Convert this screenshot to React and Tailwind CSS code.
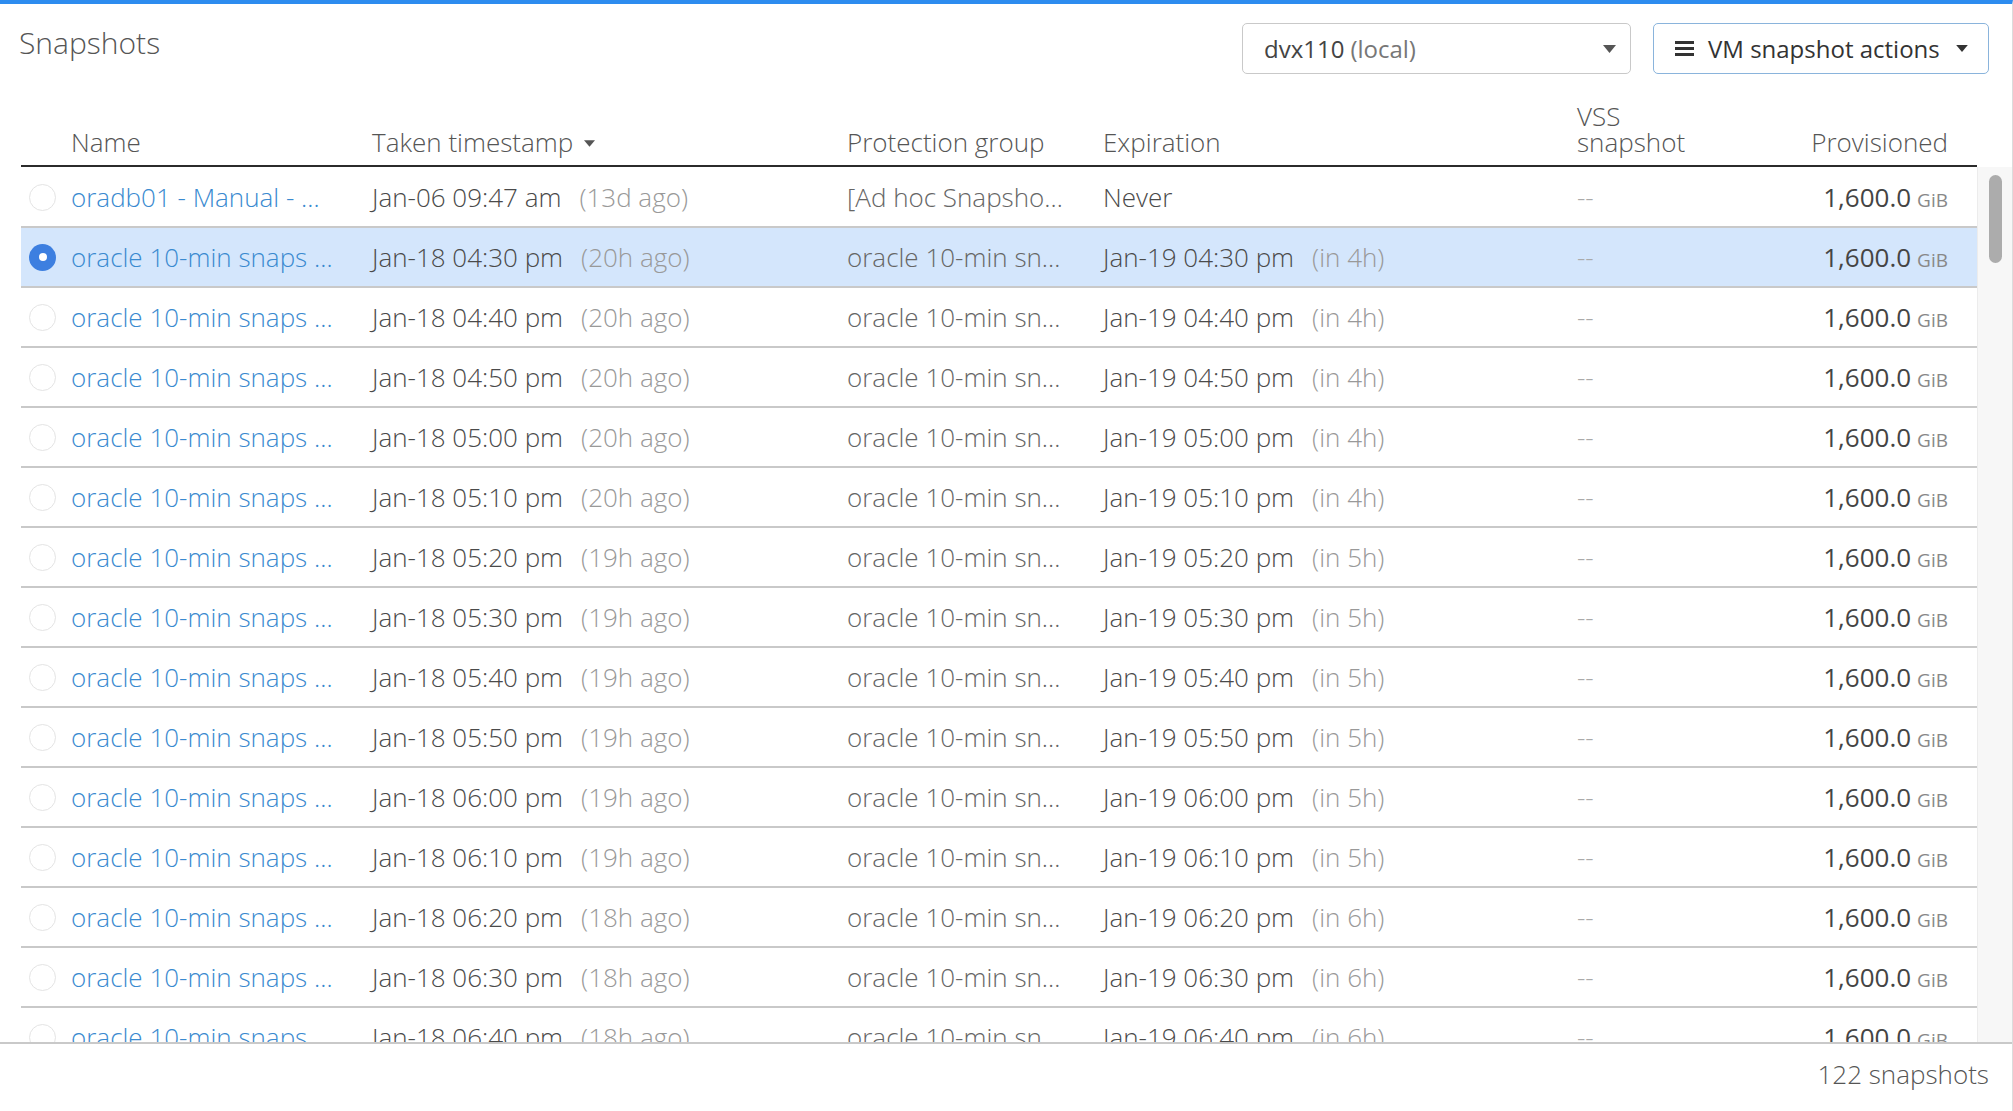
const rows = [
  { name: 'oradb01 - Manual - …', taken: 'Jan-06 09:47 am', ago: '(13d ago)', group: '[Ad hoc Snapsho…', exp: 'Never', inn: '' },
  ...[
    ['04:30', '20h', '4h'],
    ['04:40', '20h', '4h'],
    ['04:50', '20h', '4h'],
    ['05:00', '20h', '4h'],
    ['05:10', '20h', '4h'],
    ['05:20', '19h', '5h'],
    ['05:30', '19h', '5h'],
    ['05:40', '19h', '5h'],
    ['05:50', '19h', '5h'],
    ['06:00', '19h', '5h'],
    ['06:10', '19h', '5h'],
    ['06:20', '18h', '6h'],
    ['06:30', '18h', '6h'],
    ['06:40', '18h', '6h'],
    ['06:50', '18h', '6h'],
  ].map(([t, ago, inn]) => ({
    name: 'oracle 10-min snaps …',
    taken: `Jan-18 ${t} pm`,
    ago: `(${ago} ago)`,
    group: 'oracle 10-min sn…',
    exp: `Jan-19 ${t} pm`,
    inn: `(in ${inn})`,
  })),
];

const Caret = ({ className }) => (
  <svg viewBox="0 0 10 6" className={className}>
    <path d="M0 0h10L5 6z" fill="currentColor" />
  </svg>
);

const Radio = ({ checked }) =>
  checked ? (
    <span className="w-[27px] h-[27px] rounded-full bg-[#3d7fe0] flex items-center justify-center">
      <span className="w-[8px] h-[8px] rounded-full bg-white" />
    </span>
  ) : (
    <span className="w-[27px] h-[27px] rounded-full bg-white border border-[#e4e4e4]" />
  );

const App = () => {
  return (
    <div className="h-screen w-full flex flex-col bg-white border-t-4 border-[#2d8cef] border-r border-r-[#dcdcdc] font-['Open_Sans',sans-serif] font-light text-[#555] overflow-hidden">
      {/* top bar */}
      <div className="h-[71px] flex items-start shrink-0">
        <h1 className="pl-[19px] pt-[21px] text-[30px] leading-[36px] font-light text-[#555]">Snapshots</h1>
        <div className="ml-auto pt-[19px] pr-[23px] flex gap-[22px]">
          <div className="w-[389px] h-[51px] border border-[#c9c9c9] rounded-[5px] flex items-center pl-[21px] pr-[14px] text-[24px] font-normal">
            <span className="text-[#444]">dvx110</span>
            <span className="ml-[6px] text-[#777]">(local)</span>
            <Caret className="ml-auto w-[13px] h-[8px] text-[#555]" />
          </div>
          <div className="w-[336px] h-[51px] border-[1.5px] border-[#8ab4dc] rounded-[5px] flex items-center pl-[21px] pr-[20px] text-[24px] font-normal text-[#333]">
            <span className="flex flex-col gap-[3px] w-[19px]">
              <span className="h-[3px] bg-[#333]" />
              <span className="h-[3px] bg-[#333]" />
              <span className="h-[3px] bg-[#333]" />
            </span>
            <span className="ml-[14px]">VM snapshot actions</span>
            <Caret className="ml-auto w-[12px] h-[7px] text-[#333]" />
          </div>
        </div>
      </div>

      {/* header */}
      <div className="ml-[21px] w-[1956px] h-[92px] shrink-0 flex items-end border-b-2 border-[#2b2b2b] pb-[10px] text-[26px] leading-[26px] text-[#555]">
        <div className="w-[50px]" />
        <div className="w-[301px]">Name</div>
        <div className="w-[475px] flex items-center">
          Taken timestamp
          <Caret className="ml-[11px] mt-[3px] w-[11px] h-[7px] text-[#555]" />
        </div>
        <div className="w-[256px]">Protection group</div>
        <div className="w-[474px]">Expiration</div>
        <div className="w-[183px]">
          VSS
          <br />
          snapshot
        </div>
        <div className="flex-1 text-right pr-[29px]">Provisioned</div>
      </div>

      {/* body */}
      <div className="flex-1 flex min-h-0">
        <div className="ml-[21px] w-[1956px] overflow-hidden pt-[1px]">
          {rows.map((r, i) => (
            <div
              key={i}
              className={`h-[60px] flex items-center border-b-2 border-[#c9c9c9] text-[26px] ${i === 1 ? 'bg-[#d4e6fc]' : 'bg-white'}`}
            >
              <div className="w-[50px] pl-[8px] flex items-center">
                <Radio checked={i === 1} />
              </div>
              <div className="w-[301px] text-[#3a8ad0] whitespace-nowrap">{r.name}</div>
              <div className="w-[475px] whitespace-nowrap">
                <span className="text-[#4a4a4a]">{r.taken}</span>
                <span className="ml-[18px] text-[#999]">{r.ago}</span>
              </div>
              <div className="w-[256px] text-[#666] whitespace-nowrap">{r.group}</div>
              <div className="w-[474px] whitespace-nowrap">
                <span className="text-[#4a4a4a]">{r.exp}</span>
                {r.inn && <span className="ml-[18px] text-[#999]">{r.inn}</span>}
              </div>
              <div className="w-[183px] text-[#aaa]">--</div>
              <div className="flex-1 text-right pr-[29px] whitespace-nowrap">
                <span className="font-normal text-[#444]">1,600.0</span>
                <span className="ml-[6px] text-[19px] font-normal text-[#888]">GiB</span>
              </div>
            </div>
          ))}
        </div>
        <div className="flex-1 bg-[#f7f7f7] border-l border-[#ececec] pt-[8px] flex justify-center">
          <div className="w-[13px] h-[88px] rounded-full bg-[#acacac]" />
        </div>
      </div>

      {/* footer */}
      <div className="h-[69px] shrink-0 border-t-2 border-[#c9c9c9] flex items-center justify-end pr-[23px] pb-[7px] text-[26px] text-[#555]">
        122 snapshots
      </div>
    </div>
  );
};

export default App;
